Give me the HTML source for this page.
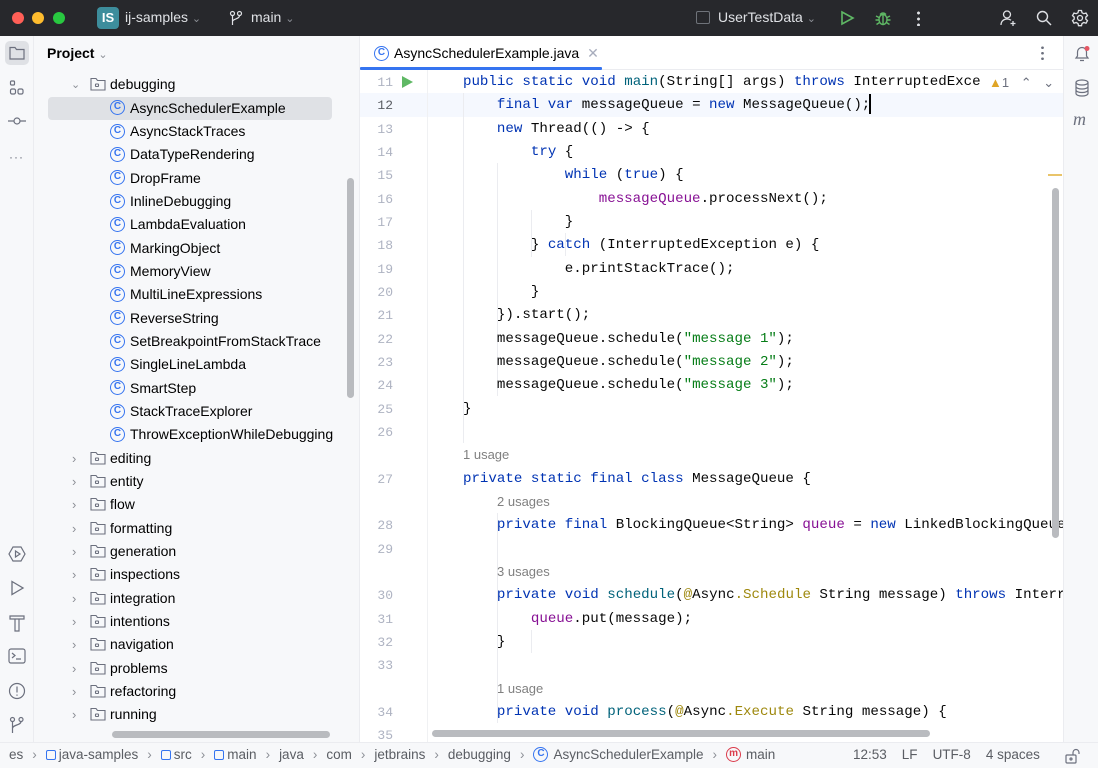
<!DOCTYPE html>
<html><head><meta charset="utf-8">
<style>
*{margin:0;padding:0;box-sizing:border-box}
body{width:1098px;height:768px;overflow:hidden;background:#fff;font-family:"Liberation Sans",sans-serif;position:relative;color:#000}
.a{position:absolute}
#title{left:0;top:0;width:1098px;height:36px;background:#27282c;color:#dfe1e5;font-size:14px}
#left{left:0;top:36px;width:34px;height:706px;background:#f7f8fa;border-right:1px solid #ebecf0}
#proj{left:34px;top:36px;width:326px;height:706px;background:#f7f8fa;border-right:1px solid #ebecf0;overflow:hidden}
#right{left:1063px;top:36px;width:35px;height:706px;background:#f7f8fa;border-left:1px solid #ebecf0}
#tabs{left:360px;top:36px;width:703px;height:34px;border-bottom:1px solid #ebecf0;background:#fff}
#ed{left:360px;top:70px;width:703px;height:672px;overflow:hidden;background:#fff}
#status{left:0;top:742px;width:1098px;height:26px;background:#f7f8fa;border-top:1px solid #ebecf0;font-size:13.5px;color:#5a5d63}
.row{position:absolute;height:23.33px;line-height:23.33px;font-size:14px;white-space:nowrap}
.code{position:absolute;left:69px;height:23.33px;line-height:23.33px;padding-top:1px;font-family:"Liberation Mono",monospace;font-size:14.15px;white-space:pre;color:#080808}
.ln{position:absolute;left:0;width:33px;text-align:right;height:23.33px;line-height:23.33px;padding-top:1px;font-family:"Liberation Mono",monospace;font-size:13px;color:#aeb3c2}
.hint{position:absolute;height:23.33px;line-height:23.33px;font-size:13px;color:#808080;font-family:"Liberation Sans",sans-serif}
.k{color:#0033b3}.f{color:#871094}.s{color:#067d17}.an{color:#9e880d}.m{color:#00627a}
.ci{display:inline-block;width:15px;height:15px;border:1.3px solid #3574f0;border-radius:50%;color:#3574f0;font-size:10px;line-height:12.5px;text-align:center;vertical-align:middle;position:relative;top:-1px;margin-right:5px;font-weight:bold}
.fo{display:inline-block;vertical-align:-2px;margin-right:4px}
.chev{position:absolute;color:#8c8f96;font-size:11px}
.sb{position:absolute;background:#b9bbbf;border-radius:4px}
.guide{position:absolute;width:1px;background:#ebecf0}
.sp{margin:0 9px;color:#8c8f96}
.mod{display:inline-block;width:10px;height:10px;border:1.3px solid #3574f0;border-radius:2px;vertical-align:-1px;margin-right:3px}
</style></head><body>

<div id="title" class="a">
  <div class="a" style="left:12px;top:12px;width:12px;height:12px;border-radius:50%;background:#ff5f57"></div>
  <div class="a" style="left:32px;top:12px;width:12px;height:12px;border-radius:50%;background:#febc2e"></div>
  <div class="a" style="left:53px;top:12px;width:12px;height:12px;border-radius:50%;background:#28c840"></div>
  <div class="a" style="left:97px;top:7px;width:22px;height:22px;border-radius:4px;background:#3d8d9c;color:#fff;font-size:13px;font-weight:bold;text-align:center;line-height:22px">IS</div>
  <div class="a" style="left:125px;top:9px">ij-samples <span style="color:#8c8f96;font-size:11px">&#8964;</span></div>
  <svg class="a" style="left:229px;top:10px" width="14" height="16" viewBox="0 0 14 16" fill="none" stroke="#dfe1e5" stroke-width="1.2"><circle cx="3.5" cy="3.5" r="2"/><circle cx="10.5" cy="3.5" r="2"/><path d="M3.5 5.5V15M10.5 5.5c0 4-7 3-7 6"/></svg>
  <div class="a" style="left:251px;top:9px">main <span style="color:#8c8f96;font-size:11px">&#8964;</span></div>
  <div class="a" style="left:696px;top:11px;width:14px;height:13px;border:1.2px solid #6f737a;border-radius:2px"></div>
  <div class="a" style="left:718px;top:9px">UserTestData <span style="color:#8c8f96;font-size:11px">&#8964;</span></div>
  <svg class="a" style="left:839px;top:10px" width="16" height="16" viewBox="0 0 16 16" fill="none" stroke="#5fb865" stroke-width="1.6"><path d="M3 2l11 6-11 6z"/></svg>
  <svg class="a" style="left:874px;top:9px" width="18" height="18" viewBox="0 0 18 18" fill="none" stroke="#5fb865" stroke-width="1.4"><ellipse cx="9" cy="10.5" rx="4" ry="5"/><path d="M6 5.5q3-3 6 0M2 7l3 1.5M16 7l-3 1.5M1.5 11h3.5M13 11h3.5M2.5 15.5l3-2M15.5 15.5l-3-2M9 6v9"/></svg>
  <div class="a" style="left:917px;top:10px;width:3px;height:16px;background:radial-gradient(circle,#dfe1e5 1.3px,transparent 1.6px) 0 0/3px 6px"></div>
  <svg class="a" style="left:999px;top:9px" width="18" height="18" viewBox="0 0 18 18" fill="none" stroke="#dfe1e5" stroke-width="1.3"><circle cx="8" cy="5.5" r="3.5"/><path d="M2 16c0-4 3-6 6-6 2 0 3 .5 4 1.3M14 12v5M11.5 14.5h5"/></svg>
  <svg class="a" style="left:1036px;top:10px" width="16" height="16" viewBox="0 0 16 16" fill="none" stroke="#dfe1e5" stroke-width="1.4"><circle cx="6.5" cy="6.5" r="5"/><path d="M10.5 10.5l4.5 4.5"/></svg>
  <svg class="a" style="left:1071px;top:9px" width="18" height="18" viewBox="0 0 18 18" fill="none" stroke="#dfe1e5" stroke-width="1.3"><circle cx="9" cy="9" r="2.5"/><path d="M7.5 1.5h3l.5 2.2 1.8 1 2.2-.7 1.5 2.6-1.7 1.5v2l1.7 1.5-1.5 2.6-2.2-.7-1.8 1-.5 2.2h-3l-.5-2.2-1.8-1-2.2.7-1.5-2.6 1.7-1.5v-2L1.5 6.6 3 4l2.2.7 1.8-1z"/></svg>
</div>

<div id="left" class="a">
  <div class="a" style="left:5px;top:5px;width:24px;height:24px;background:#dfe1e5;border-radius:5px"></div>
  <svg class="a" style="left:9px;top:10px" width="16" height="14" viewBox="0 0 16 14" fill="none" stroke="#6c707e" stroke-width="1.2"><path d="M1 1.5h5l1.5 2H15v9.5H1z"/></svg>
  <svg class="a" style="left:9px;top:44px" width="16" height="16" viewBox="0 0 16 16" fill="none" stroke="#6c707e" stroke-width="1.2"><rect x="1.5" y="1" width="4" height="4" rx="1"/><rect x="1.5" y="9" width="5" height="5" rx="1.5"/><rect x="9" y="9" width="5" height="5" rx="1.5"/></svg>
  <svg class="a" style="left:8px;top:78px" width="18" height="14" viewBox="0 0 18 14" fill="none" stroke="#6c707e" stroke-width="1.2"><circle cx="9" cy="7" r="3"/><path d="M0 7h6M12 7h6"/></svg>
  <div class="a" style="left:9px;top:114px;color:#6c707e;font-size:12px;letter-spacing:1px">···</div>
  <svg class="a" style="left:8px;top:509px" width="18" height="18" viewBox="0 0 18 18" fill="none" stroke="#6c707e" stroke-width="1.2"><path d="M5 2h8l4 7-4 7H5L1 9z"/><path d="M7.5 6v6l4.5-3z"/></svg>
  <svg class="a" style="left:9px;top:544px" width="16" height="16" viewBox="0 0 16 16" fill="none" stroke="#6c707e" stroke-width="1.3"><path d="M3 1.5l11 6.5-11 6.5z"/></svg>
  <svg class="a" style="left:9px;top:578px" width="16" height="18" viewBox="0 0 16 18" fill="none" stroke="#6c707e" stroke-width="1.2"><path d="M1 2h14v3H1zM6 5v12h4V5"/></svg>
  <svg class="a" style="left:8px;top:612px" width="18" height="16" viewBox="0 0 18 16" fill="none" stroke="#6c707e" stroke-width="1.2"><rect x="1" y="1" width="16" height="14" rx="2"/><path d="M4 5l3 2.5L4 10M8 11h5"/></svg>
  <svg class="a" style="left:8px;top:646px" width="18" height="18" viewBox="0 0 18 18" fill="none" stroke="#6c707e" stroke-width="1.2"><circle cx="9" cy="9" r="7.5"/><path d="M9 4.5v6M9 12.5v1.2"/></svg>
  <svg class="a" style="left:9px;top:680px" width="16" height="18" viewBox="0 0 16 18" fill="none" stroke="#6c707e" stroke-width="1.2"><circle cx="3.5" cy="3.5" r="2"/><circle cx="12" cy="3.5" r="2"/><path d="M3.5 5.5V17M12 5.5c0 4-8.5 3-8.5 7"/></svg>
</div>

<div id="proj" class="a">
  <div class="a" style="left:13px;top:9px;font-size:14px;font-weight:bold;color:#000">Project <span style="color:#8c8f96;font-size:11px;font-weight:normal">&#8964;</span></div>
  <div class="a" style="left:14px;top:61px;width:284px;height:23px;background:#dfe1e5;border-radius:4px"></div>
  <div id="tree"></div>
  <div class="sb" style="left:313px;top:142px;width:7px;height:220px"></div>
  <div class="sb" style="left:78px;top:695px;width:218px;height:7px"></div>
</div>

<div id="tabs" class="a">
  <div class="a" style="left:14px;top:9px;font-size:14px;color:#000"><span class="ci">C</span>AsyncSchedulerExample.java <span style="color:#a8adbd;margin-left:4px">&#10005;</span></div>
  <div class="a" style="left:0;top:31px;width:242px;height:3px;background:#3574f0;border-radius:1px"></div>
  <div class="a" style="left:681px;top:9px;width:3px;height:16px;background:radial-gradient(circle,#6c707e 1.2px,transparent 1.5px) 0 0/3px 5.5px"></div>
</div>

<div id="ed" class="a">
  <div class="a" style="left:0;top:23.33px;width:703px;height:23.33px;background:#f5f8fe"></div>
  <div class="a" style="left:67px;top:0;width:1px;height:672px;background:#f0f1f3"></div>
  <div id="code"></div>
  <svg class="a" style="left:41px;top:6px" width="12" height="12" viewBox="0 0 12 12"><path d="M1 0l11 6-11 6z" fill="#5fb865"/></svg>
  <div class="a" style="left:621px;top:0;height:23px;line-height:25px;font-size:13px;color:#6c707e;background:#fff;padding-left:8px;width:82px"><span style="color:#e0a526">&#9650;</span>1 <span style="margin-left:8px">&#8963;</span> <span style="margin-left:8px">&#8964;</span></div>
  <div class="a" style="left:509px;top:24px;width:2px;height:20px;background:#000"></div>
  <div class="a" style="left:688px;top:104px;width:14px;height:2px;background:#e9c46a"></div>
  <div class="sb" style="left:692px;top:118px;width:7px;height:350px"></div>
  <div class="sb" style="left:72px;top:660px;width:498px;height:7px"></div>
</div>

<div id="right" class="a">
  <svg class="a" style="left:9px;top:9px" width="18" height="18" viewBox="0 0 18 18" fill="none" stroke="#6c707e" stroke-width="1.2"><path d="M3 13h12l-1.5-2V7a4.5 4.5 0 0 0-9 0v4zM7 15.5h4"/><circle cx="14" cy="3.5" r="2.5" fill="#e55765" stroke="none"/></svg>
  <svg class="a" style="left:10px;top:43px" width="16" height="18" viewBox="0 0 16 18" fill="none" stroke="#6c707e" stroke-width="1.2"><ellipse cx="8" cy="3.5" rx="6" ry="2.5"/><path d="M2 3.5v11c0 1.4 2.7 2.5 6 2.5s6-1.1 6-2.5v-11M2 7.5c0 1.4 2.7 2.5 6 2.5s6-1.1 6-2.5M2 11c0 1.4 2.7 2.5 6 2.5s6-1.1 6-2.5"/></svg>
  <div class="a" style="left:9px;top:73px;font-size:18px;font-style:italic;color:#6c707e;font-family:'Liberation Serif',serif">m</div>
</div>

<div id="status" class="a">
  <div class="a" style="left:9px;top:4px;white-space:nowrap">es<span class="sp">&#8250;</span><span class="mod"></span>java-samples<span class="sp">&#8250;</span><span class="mod"></span>src<span class="sp">&#8250;</span><span class="mod"></span>main<span class="sp">&#8250;</span>java<span class="sp">&#8250;</span>com<span class="sp">&#8250;</span>jetbrains<span class="sp">&#8250;</span>debugging<span class="sp">&#8250;</span><span class="ci">C</span>AsyncSchedulerExample<span class="sp">&#8250;</span><span class="ci" style="border-color:#db3b4b;color:#db3b4b">m</span>main</div>
  <div class="a" style="left:853px;top:4px;white-space:nowrap">12:53<span style="margin-left:15px">LF</span><span style="margin-left:15px">UTF-8</span><span style="margin-left:15px">4 spaces</span></div>
  <svg class="a" style="left:1064px;top:5px" width="16" height="16" viewBox="0 0 16 16" fill="none" stroke="#6c707e" stroke-width="1.2"><rect x="2" y="7" width="10" height="8" rx="1"/><path d="M9 7V4.5a3 3 0 0 1 6 0V6"/><circle cx="7" cy="11" r="1"/></svg>
</div>

<script>
var tree=document.getElementById('tree');
var classes=["AsyncSchedulerExample","AsyncStackTraces","DataTypeRendering","DropFrame","InlineDebugging","LambdaEvaluation","MarkingObject","MemoryView","MultiLineExpressions","ReverseString","SetBreakpointFromStackTrace","SingleLineLambda","SmartStep","StackTraceExplorer","ThrowExceptionWhileDebugging"];
var folders=["editing","entity","flow","formatting","generation","inspections","integration","intentions","navigation","problems","refactoring","running"];
var fsvg='<svg class="fo" width="16" height="14" viewBox="0 0 16 14" fill="none" stroke="#6c707e" stroke-width="1.1"><path d="M1 1.5h5l1.5 2H15v9.5H1z"/><rect x="5.5" y="7" width="3" height="2.5" rx=".5"/></svg>';
var h='';
function rowTop(i){return (85+23.33*i-36-11.67).toFixed(2);}
h+='<div class="chev" style="left:37px;top:'+(+rowTop(0)+5)+'px">&#8964;</div>';
h+='<div class="row" style="left:56px;top:'+rowTop(0)+'px">'+fsvg+'debugging</div>';
classes.forEach(function(c,i){h+='<div class="row" style="left:76px;top:'+rowTop(i+1)+'px"><span class="ci">C</span>'+c+'</div>';});
folders.forEach(function(f,i){var t=rowTop(i+16);h+='<div class="chev" style="left:38px;top:'+(+t+4)+'px;font-size:13px">&#8250;</div><div class="row" style="left:56px;top:'+t+'px">'+fsvg+f+'</div>';});
tree.innerHTML=h;

var rows=[
[11,'    <span class="k">public static void</span> <span class="m">main</span>(String[] args) <span class="k">throws</span> InterruptedException {'],
[12,'        <span class="k">final var</span> messageQueue = <span class="k">new</span> MessageQueue();'],
[13,'        <span class="k">new</span> Thread(() -> {'],
[14,'            <span class="k">try</span> {'],
[15,'                <span class="k">while</span> (<span class="k">true</span>) {'],
[16,'                    <span class="f">messageQueue</span>.processNext();'],
[17,'                }'],
[18,'            } <span class="k">catch</span> (InterruptedException e) {'],
[19,'                e.printStackTrace();'],
[20,'            }'],
[21,'        }).start();'],
[22,'        messageQueue.schedule(<span class="s">"message 1"</span>);'],
[23,'        messageQueue.schedule(<span class="s">"message 2"</span>);'],
[24,'        messageQueue.schedule(<span class="s">"message 3"</span>);'],
[25,'    }'],
[26,''],
['h',4,'1 usage'],
[27,'    <span class="k">private static final class</span> MessageQueue {'],
['h',8,'2 usages'],
[28,'        <span class="k">private final</span> BlockingQueue&lt;String&gt; <span class="f">queue</span> = <span class="k">new</span> LinkedBlockingQueue&lt;&gt;();'],
[29,''],
['h',8,'3 usages'],
[30,'        <span class="k">private void</span> <span class="m">schedule</span>(<span class="an">@</span>Async<span class="an">.Schedule</span> String message) <span class="k">throws</span> InterruptedException {'],
[31,'            <span class="f">queue</span>.put(message);'],
[32,'        }'],
[33,''],
['h',8,'1 usage'],
[34,'        <span class="k">private void</span> <span class="m">process</span>(<span class="an">@</span>Async<span class="an">.Execute</span> String message) {'],
[35,'']
];
var code='';
[[103,23,350],[137,93,233],[171,140,47],[205,163,23],[137,443,210],[171,560,23]].forEach(function(g){code+='<div class="guide" style="left:'+g[0]+'px;top:'+g[1]+'px;height:'+g[2]+'px"></div>';});
rows.forEach(function(r,i){var t=(23.33*i).toFixed(2);
 if(r[0]==='h'){code+='<div class="hint" style="left:'+(69+r[1]*8.5)+'px;top:'+t+'px">'+r[2]+'</div>';}
 else{code+='<div class="ln" style="top:'+t+'px;'+(r[0]==12?'color:#5a5d63':'')+'">'+r[0]+'</div><div class="code" style="top:'+t+'px">'+r[1]+'</div>';}
});
document.getElementById('code').innerHTML=code;
</script>
</body></html>
